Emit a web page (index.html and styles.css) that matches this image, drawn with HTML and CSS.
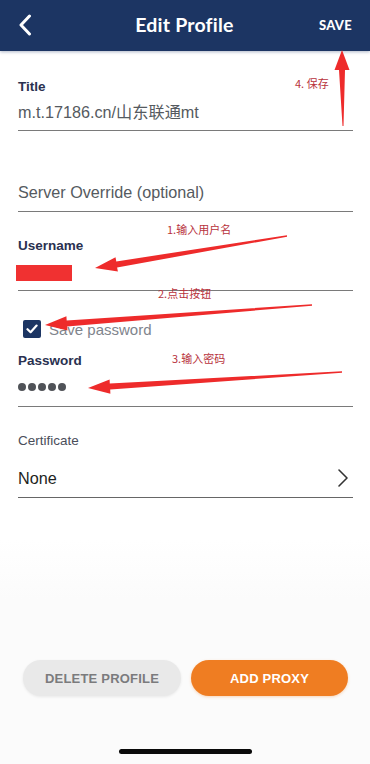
FILE: index.html
```html
<!DOCTYPE html>
<html lang="zh">
<head>
<meta charset="utf-8">
<title>Edit Profile</title>
<link rel="stylesheet" href="styles.css">
</head>
<body>
<div class="screen">
  <header class="topbar">
    <svg class="back" width="14" height="22" viewBox="0 0 14 22"><path d="M11.5 2 L3 11 L11.5 20" fill="none" stroke="#fff" stroke-width="3" stroke-linecap="round" stroke-linejoin="round"/></svg>
    <h1 class="topbar-title">Edit Profile</h1>
    <span class="save">SAVE</span>
  </header>

  <main class="form">
    <div class="field field-title">
      <div class="label">Title</div>
      <div class="value">m.t.17186.cn/山东联通mt</div>
    </div>
    <div class="field field-server">
      <div class="value">Server Override (optional)</div>
    </div>
    <div class="field field-user">
      <div class="label">Username</div>
      <div class="value"><span class="redact"></span></div>
    </div>
    <div class="check-row">
      <span class="checkbox"><svg width="12" height="10" viewBox="0 0 12 10"><path d="M1.5 5.2 L4.6 8.2 L10.6 1.6" fill="none" stroke="#fff" stroke-width="2.2" stroke-linecap="round" stroke-linejoin="round"/></svg></span>
      <span class="check-text">Save password</span>
    </div>
    <div class="field field-pass">
      <div class="label">Password</div>
      <div class="value dots"><i></i><i></i><i></i><i></i><i></i></div>
    </div>
    <div class="field field-cert">
      <div class="label label-light">Certificate</div>
      <div class="value value-row"><span class="none">None</span>
        <svg width="12" height="20" viewBox="0 0 12 20"><path d="M2 2 L10 10 L2 18" fill="none" stroke="#333" stroke-width="1.6" stroke-linecap="round" stroke-linejoin="round"/></svg>
      </div>
    </div>
  </main>

  <div class="actions">
    <button class="btn btn-gray">DELETE PROFILE</button>
    <button class="btn btn-orange">ADD PROXY</button>
  </div>
  <div class="home-bar"><span></span></div>

  <div class="annot">
    <svg class="arrows" width="370" height="764" viewBox="0 0 370 764">
      <polygon fill="#ee2b2b" points="342.5,126 339,70 334.5,70 342,50 349.5,70 345,70 343.5,126"/>
      <polygon fill="#ee2b2b" points="286.9,235.3 116.3,261.4 115.5,257.2 95,268 117.9,271.6 117.1,267.4 287.1,236.7"/>
      <polygon fill="#ee2b2b" points="311.96,304.3 66.7,320.4 66.4,316.2 45,325 67.4,330.6 67.1,326.4 312.04,305.7"/>
      <polygon fill="#ee2b2b" points="342,371.3 109.8,383.6 109.6,379.4 88,388 110.4,393.8 110.2,389.6 342,372.7"/>
    </svg>
    <span class="note note4">4. 保存</span>
    <span class="note note1">1.输入用户名</span>
    <span class="note note2">2.点击按钮</span>
    <span class="note note3">3.输入密码</span>
  </div>
</div>
</body>
</html>
```
FILE: styles.css
```css
* { box-sizing: border-box; margin: 0; padding: 0; }
html, body { width: 370px; height: 764px; overflow: hidden; }
body {
  background: #fff;
  font-family: "Liberation Sans", Arial, "Noto Sans CJK SC", sans-serif;
}
.screen {
  position: relative;
  width: 370px;
  height: 764px;
  display: flex;
  flex-direction: column;
  background: linear-gradient(#fff 0, #fff 540px, #fbfbfb 600px, #fbfbfb 100%);
}
.topbar {
  height: 51px;
  flex: none;
  background: #1c3563;
  display: flex;
  align-items: center;
  padding: 0 18px 2px 18px;
  box-shadow: 0 1px 3px rgba(28,53,99,0.35);
}
.back { flex: none; }
.topbar-title {
  flex: 1;
  text-align: center;
  color: #fff;
  font-family: "Lato", "Open Sans", sans-serif;
  font-weight: 700;
  font-size: 19.5px;
  letter-spacing: 0.2px;
  padding-left: 18px;
}
.save {
  color: #fff;
  font-family: "Lato", "Liberation Sans", sans-serif;
  font-weight: 900;
  font-size: 13px;
  letter-spacing: 0.3px;
}
.form {
  padding: 0 17px 0 18px;
  display: flex;
  flex-direction: column;
}
.field { border-bottom: 1.5px solid #7a7a7a; }
.label {
  font-size: 13.5px;
  line-height: 16px;
  font-weight: 700;
  color: #2a3150;
}
.label-light { font-weight: 400; color: #4a4e5a; font-size: 13.5px; }
.value {
  font-size: 16.2px;
  line-height: 22px;
  color: #555a60;
}
.field-title { margin-top: 28px; padding-bottom: 7px; }
.field-title .value { margin-top: 6px; }
.field-server { margin-top: 50px; padding-bottom: 8px; }
.field-user { margin-top: 26px; padding-bottom: 6px; }
.field-user .value { margin-top: 8px; height: 22px; display: flex; align-items: center; }
.redact { display: block; width: 56px; height: 16px; background: #f03131; margin-left: -2px; }
.check-row {
  display: flex;
  align-items: center;
  margin-top: 29px;
  padding-left: 5px;
  height: 18px;
}
.checkbox {
  width: 18px; height: 18px;
  background: #1c3563;
  border-radius: 2px;
  display: flex; align-items: center; justify-content: center;
}
.check-text { margin-left: 8px; font-size: 15px; color: #80848c; }
.field-pass { margin-top: 15px; padding-bottom: 8px; }
.field-pass .value { margin-top: 7px; }
.dots { display: flex; align-items: center; gap: 2px; height: 22px; }
.dots i { display: block; width: 8px; height: 8px; border-radius: 50%; background: #505358; }
.field-cert { margin-top: 26px; padding-bottom: 8px; border-bottom-color: #666; }
.value-row { display: flex; align-items: center; justify-content: space-between; margin-top: 18px; padding-right: 4px; }
.none { color: #1e1f22; }
.actions {
  margin-top: auto;
  display: flex;
  gap: 10px;
  padding: 0 22px 0 23px;
}
.btn {
  flex: none;
  height: 36px;
  border: none;
  border-radius: 18px;
  font-family: "Liberation Sans", Arial, sans-serif;
  font-weight: 700;
  font-size: 13px;
  letter-spacing: 0.2px;
}
.btn-gray { width: 158px; background: #e9e9e9; color: #7b7b7d; box-shadow: 0 1px 3px rgba(0,0,0,0.08); }
.btn-orange { width: 157px; background: #ef7d22; color: #fff; box-shadow: 0 1px 3px rgba(239,125,34,0.3); }
.home-bar {
  height: 68px;
  display: flex;
  justify-content: center;
  align-items: flex-start;
  padding-top: 53px;
}
.home-bar span { display: block; width: 133px; height: 5px; border-radius: 3px; background: #0a0a0a; }
.annot { position: absolute; inset: 0; pointer-events: none; }
.arrows { position: absolute; left: 0; top: 0; }
.note {
  position: absolute;
  font-family: "Noto Sans CJK SC", sans-serif;
  font-size: 11px;
  line-height: 14px;
  color: #b8323c;
  white-space: nowrap;
}
.note4 { left: 295px; top: 76px; }
.note1 { left: 167px; top: 222px; }
.note2 { left: 158px; top: 286px; }
.note3 { left: 172px; top: 351px; }
```
